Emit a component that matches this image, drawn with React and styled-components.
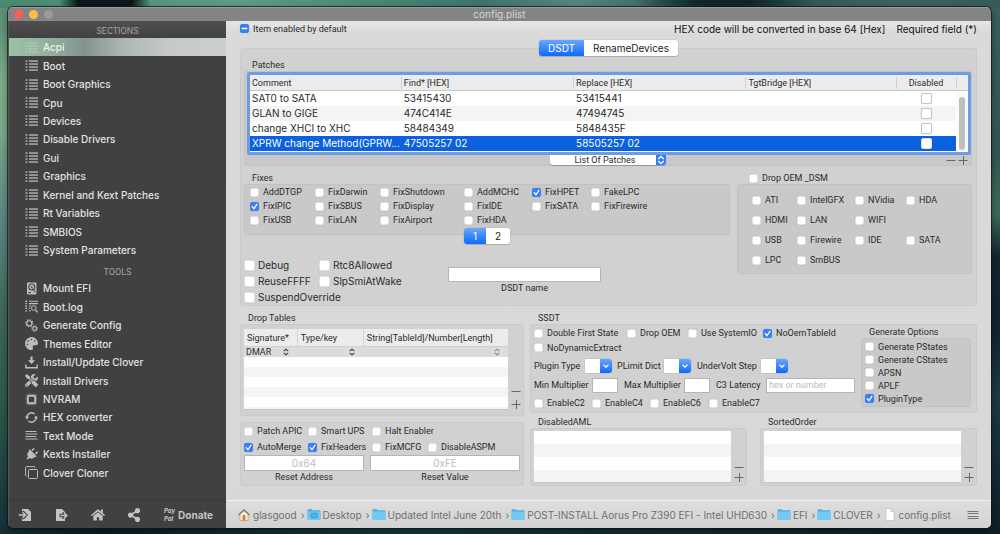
import React, { useState } from "react";
import styled, { createGlobalStyle, css } from "styled-components";
import { FaHome, FaPalette, FaPlug, FaShareAlt, FaTools } from "react-icons/fa";

const fontStack = "Inter, \"Liberation Sans\", sans-serif";
const smallFontStack = "Roboto, \"Liberation Sans\", sans-serif";
const ink = "#2a2a2a";
const blueGradient = "linear-gradient(#69a8fc, #0f69f9)";
const stripe = "#f3f4f4";
const tick = "url(\"data:image/svg+xml,%3Csvg xmlns='http://www.w3.org/2000/svg' viewBox='0 0 10 10'%3E%3Cpath d='M2.4 5.2l2 2.3 3.3-5' fill='none' stroke='white' stroke-width='1.5' stroke-linecap='round'/%3E%3C/svg%3E\")";
const dash = "url(\"data:image/svg+xml,%3Csvg xmlns='http://www.w3.org/2000/svg' viewBox='0 0 10 10'%3E%3Cpath d='M2.5 5h5' fill='none' stroke='white' stroke-width='1.5' stroke-linecap='round'/%3E%3C/svg%3E\")";

const smallText = css`
  font-family: ${smallFontStack};
  font-size: 9px;
  font-weight: 400;
`;

const GlobalStyle = createGlobalStyle`
  *, *::before, *::after {
    box-sizing: border-box;
  }
  body {
    background: #24413f;
    color: ${ink};
    font-family: ${fontStack};
    font-size: 10px;
    line-height: 12px;
    margin: 0;
  }
  button, input, select {
    color: inherit;
    font: inherit;
    margin: 0;
    padding: 0;
  }
`;

const Desktop = styled.div`
  background:
    radial-gradient(ellipse 46px 30px at 105px 0, #0c191c 60%, transparent),
    radial-gradient(ellipse 90px 12px at 725px 2px, #10262c 30%, transparent),
    radial-gradient(ellipse 60px 60px at 0 90px, #7fae8c, transparent),
    linear-gradient(90deg, #4a8a70 0, #5f9d84 24%, #3f746b 48%, #568680 58%, #2b5150 72%, #3c6463 90%, #355c58 100%) top / 100% 8px no-repeat,
    linear-gradient(90deg, #16302f, #0c1e24 10%, #1a3a38 40%, #14282c 70%, #0d2024) bottom / 100% 6px no-repeat,
    linear-gradient(#3a605d, #345653 28%, #3d6a57 40%, #14262f 48%, #12222f 60%, #1d3a44 74%, #0f1e27) right / 12px 100% no-repeat,
    linear-gradient(#5b9076, #77a888 25%, #5d8a84 40%, #3e675a 60%, #2c5c4c 75%, #16303a);
  display: flex;
  min-height: 100vh;
  padding: 7px 9px 6px 8px;
`;

const Window = styled.div`
  border-radius: 5px;
  box-shadow: 0 0 0 1px rgba(10, 20, 20, 0.7), 0 3px 8px rgba(0, 0, 0, 0.4);
  display: flex;
  flex: 1;
  flex-direction: column;
  min-width: 0;
  overflow: hidden;
`;

const TitleBar = styled.header`
  align-items: center;
  background: #848484;
  box-shadow: inset 0 1px 0 #9a9a9a;
  color: #d6d6d6;
  display: grid;
  grid-template-columns: 1fr auto 1fr;
  height: 14px;
  padding: 0 6px;
`;

const Lights = styled.div`
  display: flex;
  gap: 6px;
`;

const Light = styled.button`
  background: ${({ $color }) => $color};
  border: 0;
  border-radius: 50%;
  height: 9px;
  width: 9px;
`;

const Body = styled.div`
  display: grid;
  flex: 1;
  grid-template-columns: 218px minmax(0, 1fr);
`;

const Sidebar = styled.nav`
  background: #414141;
  border-left: 1px solid #555;
  color: #e2e2e2;
  display: flex;
  flex-direction: column;
  font-weight: 500;
`;

const SidebarHeading = styled.h2`
  ${smallText};
  color: #a2a2a2;
  height: ${({ $tall }) => ($tall ? "20px" : "17px")};
  line-height: 12px;
  margin: 0;
  padding-top: ${({ $tall }) => ($tall ? "7px" : "4px")};
  text-align: center;
  ${({ $tall }) => !$tall && css`
    background: linear-gradient(#4f4f4f, #414141);
  `}
`;

const SidebarList = styled.ul`
  display: grid;
  flex: ${({ $count }) => $count} 1 0;
  grid-auto-rows: 1fr;
  list-style: none;
  margin: 0;
  padding: 0;
`;

const SidebarLink = styled.a`
  align-items: center;
  color: inherit;
  display: flex;
  gap: 5px;
  height: 100%;
  padding-left: 16px;
  text-decoration: none;
  svg {
    color: #bdbdbd;
    flex: none;
    height: 13px;
    width: 13px;
  }
  ${({ $active }) => $active && css`
    background: linear-gradient(90deg, #9cc3a5 0, #8fae9c 20%, #84938f 35%, #adb5b3 52%, #c6cac9 75%, #cbd0cf 100%);
    color: #eef3f0;
    svg {
      color: #b4c8ba;
    }
  `}
`;

const SidebarFooter = styled.div`
  align-items: center;
  border-top: 1px solid #383838;
  display: flex;
  height: 28px;
  justify-content: space-between;
  margin-top: 18px;
  padding: 0 13px 0 9px;
`;

const ToolButton = styled.button`
  align-items: center;
  background: none;
  border: 0;
  color: #c4c4c4;
  display: flex;
  font-weight: 700;
  gap: 3px;
  svg {
    height: 14px;
    width: 14px;
  }
`;

const PayPal = styled.span`
  display: grid;
  font-size: 6px;
  font-style: italic;
  line-height: 8px;
  text-align: left;
`;

const Main = styled.main`
  background: linear-gradient(#e6e6e6, #dadada 12px, #d8d8d8);
  display: flex;
  flex-direction: column;
  min-width: 0;
`;

const Content = styled.div`
  flex: 1;
  padding: 0 14px;
`;

const TopRow = styled.div`
  align-items: center;
  display: flex;
  height: 15px;
`;

const Note = styled.span`
  color: #111;
  margin-left: ${({ $first }) => ($first ? "auto" : "11px")};
`;

const Check = styled.label`
  ${smallText};
  align-items: center;
  display: flex;
  gap: 4px;
  white-space: nowrap;
  ${({ $large }) => $large && css`
    font-family: ${fontStack};
    font-size: 10px;
    gap: 3px;
  `}
  ${({ $span }) => $span && css`
    grid-column: span ${$span};
  `}
`;

const Box = styled.input.attrs({ type: "checkbox" })`
  appearance: none;
  background: #fff;
  border: 1px solid ${({ $outlined }) => ($outlined ? "#c4c4c4" : "#e3e3e3")};
  border-radius: 2px;
  box-shadow: 0 0 1px rgba(0, 0, 0, 0.2);
  flex: none;
  height: ${({ $large }) => ($large ? "11px" : "9px")};
  width: ${({ $large }) => ($large ? "11px" : "9px")};
  &:checked {
    background: ${tick} center / 9px no-repeat, #3880f8;
    border-color: #3880f8;
  }
  &[aria-checked="mixed"] {
    background: ${dash} center / 9px no-repeat, #3880f8;
    border-color: #3880f8;
  }
`;

const Segments = styled.div`
  background: #fff;
  border-radius: 3px;
  box-shadow: 0 0 1px rgba(0, 0, 0, 0.45), 0 1px 1px rgba(0, 0, 0, 0.15);
  display: flex;
  height: 16px;
  overflow: hidden;
  position: relative;
  width: max-content;
`;

const TabSegments = styled(Segments)`
  margin: 4px auto -8px;
`;

const PageSegments = styled(Segments)`
  margin: 1px 0 -9px 214px;
`;

const Segment = styled.button`
  background: ${({ $on }) => ($on ? blueGradient : "#fff")};
  border: 0;
  color: ${({ $on }) => ($on ? "#fff" : "#222")};
  padding: 0 9px;
`;

const Group = styled.section`
  background: ${({ $inner }) => ($inner ? "#c9c9c9" : "#d1d1d1")};
  border-radius: 3px;
  box-shadow: inset 0 0 0 1px rgba(0, 0, 0, 0.03);
`;

const GroupTitle = styled.h3`
  ${smallText};
  height: 12px;
  margin: 0;
  padding-left: 8px;
`;

const AcpiGroup = styled(Group)`
  padding: 11px 5px 1px 4px;
`;

const PatchesGroup = styled(Group)`
  padding: 1px 1px 0 3px;
`;

const FocusRing = styled.div`
  background: #fff;
  border: 3px solid #6c9ce2;
  border-radius: 2px;
  padding-bottom: 1px;
`;

const PatchTable = styled.table`
  border-collapse: separate;
  border-spacing: 0;
  table-layout: fixed;
  width: 100%;
  th {
    ${smallText};
    background: #ececec;
    border-bottom: 1px solid #c8c8c8;
    height: 16px;
    text-align: left;
  }
  th, td {
    overflow: hidden;
    padding: 0 0 0 3px;
    white-space: nowrap;
  }
  th:first-child, td:first-child {
    padding-left: 2px;
  }
  th + th {
    background: linear-gradient(#cfcfcf, #cfcfcf) 0 2px / 1px 12px no-repeat, #ececec;
  }
  td {
    height: 15px;
    line-height: 13px;
  }
`;

const PatchRow = styled.tr`
  background: ${({ $index }) => ($index % 2 ? stripe : "#fff")};
  ${({ $selected }) => $selected && css`
    background: #0b61de;
    color: #fff;
  `}
`;

const CenteredHeader = styled.th`
  && {
    padding: 0;
    text-align: center;
  }
`;

const CheckCell = styled.td`
  && {
    padding: 0;
    text-align: center;
  }
  input {
    display: block;
    margin: 0 auto;
  }
`;

const ScrollCell = styled.td`
  background: #fafafa;
  div {
    background: #bfbfbf;
    border-radius: 3px;
    height: 53px;
    margin-top: 4px;
    width: 6px;
  }
`;

const PatchActions = styled.div`
  align-items: start;
  display: grid;
  grid-template-columns: 1fr auto 1fr;
  height: 11px;
  padding-right: 2px;
`;

const PopUp = styled.div`
  ${smallText};
  background: #fff;
  border-radius: 0 0 3px 3px;
  box-shadow: 0 1px 1px rgba(0, 0, 0, 0.25);
  display: grid;
  grid-column: 2;
  grid-template-columns: 106px 10px;
  height: 10px;
  overflow: hidden;
  select {
    appearance: none;
    background: none;
    border: 0;
    grid-area: 1 / 1 / 2 / 3;
    line-height: 9px;
    padding-right: 6px;
    text-align: center;
  }
  svg {
    background: #2e7dfa;
    grid-area: 1 / 2;
    height: 10px;
    pointer-events: none;
    width: 10px;
    z-index: 1;
  }
`;

const PlusMinus = styled.div`
  display: flex;
  flex-direction: ${({ $column }) => ($column ? "column" : "row")};
  gap: ${({ $gap }) => $gap || 0}px;
  justify-content: flex-end;
  padding-bottom: ${({ $column }) => ($column ? "1px" : "0")};
  button {
    background: none;
    border: 0;
    color: #666;
    display: flex;
    justify-content: center;
  }
  svg {
    height: 10px;
    width: 12px;
  }
`;

const MiddleRow = styled.div`
  display: grid;
  gap: 7px;
  grid-template-columns: minmax(0, 486fr) minmax(0, 235fr);
  margin-top: 6px;
`;

const CheckGrid = styled.div`
  display: grid;
  grid-auto-rows: ${({ $row }) => $row || 14}px;
  grid-template-columns: ${({ $columns }) => $columns};
`;

const FixesGroup = styled(Group)`
  display: flow-root;
  padding: 1px 6px 0;
`;

const DebugRow = styled.div`
  display: flex;
  margin-top: 22px;
`;

const DebugChecks = styled(CheckGrid)`
  width: 204px;
`;

const Field = styled.div`
  ${smallText};
  display: flex;
  flex: 1;
  flex-direction: column;
  max-width: ${({ $max }) => ($max ? `${$max}px` : "none")};
  text-align: center;
`;

const DsdtField = styled(Field)`
  margin-top: 10px;
`;

const TextInput = styled.input`
  background: #fff;
  border: 1px solid #b5b5b5;
  height: ${({ $large }) => ($large ? "16px" : "15px")};
  min-width: 0;
  padding: 0 2px;
  text-align: ${({ $center }) => ($center ? "center" : "left")};
  width: 100%;
  ${({ $large }) => $large && css`
    font-family: ${fontStack};
    font-size: 10px;
  `}
  &::placeholder {
    color: #bdbdbd;
  }
`;

const DsmCheck = styled.div`
  display: flex;
  height: 12px;
  padding-left: 12px;
`;

const DsmGroup = styled(Group)`
  padding: 6px 15px 4px;
`;

const LowerRow = styled.div`
  display: grid;
  gap: 6px;
  grid-template-columns: minmax(0, 284fr) minmax(0, 447fr);
  margin-top: 6px;
`;

const DropGroup = styled(Group)`
  display: grid;
  grid-template-columns: minmax(0, 1fr) 16px;
  height: 92px;
  padding: 5px 0 6px 4px;
`;

const DropFrame = styled.div`
  background: repeating-linear-gradient(#fff 0 10px, ${stripe} 10px 20px) 0 8px;
  border-bottom: 1px solid #c6c6c6;
`;

const DropTable = styled.table`
  border-collapse: separate;
  border-spacing: 0;
  table-layout: fixed;
  width: 100%;
  th, td {
    ${smallText};
  }
  th {
    background: #ececec;
    border-bottom: 1px solid #d0d0d0;
    height: 18px;
    padding: 0 0 0 3px;
    text-align: left;
    white-space: nowrap;
  }
  th + th {
    border-left: 1px solid #d4d4d4;
  }
  td {
    background: #dcdcdc;
    height: 10px;
    line-height: 10px;
    padding: 0 7px 0 2px;
  }
`;

const CellSelect = styled.div`
  align-items: center;
  display: flex;
  opacity: ${({ $dim }) => ($dim ? 0.5 : 1)};
  select {
    appearance: none;
    background: none;
    border: 0;
    flex: 1;
    height: 10px;
    min-width: 0;
  }
  svg {
    height: 10px;
    pointer-events: none;
    width: 8px;
  }
`;

const ResetGroup = styled(Group)`
  margin-top: 6px;
  padding: 1px 4px 3px;
`;

const ResetFields = styled.div`
  display: grid;
  gap: 6px;
  grid-template-columns: 120fr 150fr;
`;

const SsdtGroup = styled(Group)`
  display: grid;
  gap: 6px;
  grid-template-columns: minmax(0, 321fr) minmax(0, 110fr);
  height: 89px;
  padding: 2px 6px 0 4px;
`;

const SsdtRows = styled.div`
  ${smallText};
  display: grid;
  grid-template-rows: 14px 15px 22px 16px 20px;
`;

const SsdtRow = styled.div`
  align-items: center;
  display: grid;
  grid-template-columns: ${({ $columns }) => $columns};
  white-space: nowrap;
`;

const Combo = styled.div`
  background: #fff;
  border-radius: 0 3px 3px 0;
  box-shadow: 0 0 1px rgba(0, 0, 0, 0.5);
  display: grid;
  grid-template-columns: 15px 12px;
  height: 14px;
  overflow: hidden;
  width: 27px;
  select {
    appearance: none;
    background: none;
    border: 0;
    grid-area: 1 / 1 / 2 / 3;
  }
  svg {
    background: ${blueGradient};
    grid-area: 1 / 2;
    height: 14px;
    pointer-events: none;
    width: 12px;
  }
`;

const GenerateGroup = styled(Group)`
  padding: 2px 4px;
`;

const ListsRow = styled.div`
  display: grid;
  gap: 13px;
  grid-template-columns: 1fr 1fr;
  margin-top: 3px;
`;

const ListGroup = styled(Group)`
  display: grid;
  grid-template-columns: minmax(0, 1fr) 16px;
  height: 58px;
  padding: 3px 0 3px 4px;
`;

const EmptyList = styled.div`
  background: repeating-linear-gradient(#fff 0 13px, ${stripe} 13px 26px);
  border-bottom: 1px solid #c6c6c6;
`;

const PathBar = styled.footer`
  align-items: center;
  background: linear-gradient(#dedede, #d2d2d2);
  border-top: 1px solid #efefef;
  color: #6f6f6f;
  display: flex;
  height: 28px;
  padding: 0 12px 0 11px;
  > svg {
    height: 12px;
    margin-left: auto;
    width: 12px;
  }
`;

const Crumb = styled.a`
  align-items: center;
  color: inherit;
  display: flex;
  gap: 2px;
  text-decoration: none;
  white-space: nowrap;
  svg {
    height: 13px;
    width: 14px;
  }
  &:not(:last-of-type)::after {
    content: "›";
    padding: 0 2px;
  }
`;

const ListIcon = () => (
  <svg viewBox="0 0 13 13" fill="currentColor" aria-hidden="true">
    {[2, 5, 8, 11].map((y) => (
      <g key={y}>
        <rect x="0.5" y={y - 0.6} width="2" height="1.3" />
        <rect x="4" y={y - 0.6} width="9" height="1.3" />
      </g>
    ))}
  </svg>
);

const DiskIcon = () => (
  <svg viewBox="0 0 13 13" aria-hidden="true">
    <rect x="2" y="0.5" width="9.5" height="12" rx="1" fill="currentColor" />
    <circle cx="6.8" cy="5" r="3" fill="none" stroke="#444" strokeWidth="1.1" />
    <circle cx="6.8" cy="5" r="0.9" fill="#444" />
    <path d="M7 6.5l3.6 4M3.4 10.6h2.5" stroke="#444" strokeWidth="1.1" />
  </svg>
);

const LogIcon = () => (
  <svg viewBox="0 0 13 13" fill="none" stroke="currentColor" aria-hidden="true">
    <path d="M4 1.2h9M4 3.6h9M4 6h2M4 8.4h1.2M4 10.8h2" strokeWidth="1.1" />
    <path d="M1.2 .6v12" strokeWidth="1.8" strokeDasharray="1.3 1.1" />
    <circle cx="8.8" cy="8" r="2.3" />
    <path d="M10.4 9.8l2.2 2.6" strokeWidth="1.3" />
  </svg>
);

const GearsIcon = () => (
  <svg viewBox="0 0 13 13" fill="none" stroke="currentColor" aria-hidden="true">
    <circle cx="4.3" cy="4.2" r="2.5" strokeWidth="1.1" />
    <circle cx="4.3" cy="4.2" r="3.5" strokeWidth="1.2" strokeDasharray="1.25 1.5" />
    <circle cx="9.6" cy="9.5" r="1.9" strokeWidth="1.1" />
    <circle cx="9.6" cy="9.5" r="2.8" strokeWidth="1" strokeDasharray="1.1 1.1" />
  </svg>
);

const DownloadIcon = () => (
  <svg viewBox="0 0 13 13" aria-hidden="true">
    <path d="M5.4 .5h2.2v3.8h2.6L6.5 8 2.8 4.3h2.6z" fill="currentColor" />
    <path d="M.8 8.5v3.3h11.4V8.5" fill="none" stroke="currentColor" strokeWidth="1.4" />
  </svg>
);

const ChipIcon = () => (
  <svg viewBox="0 0 13 13" fill="none" stroke="currentColor" aria-hidden="true">
    <rect x="2.8" y="2.8" width="7.4" height="7.4" rx="1" strokeWidth="1.9" />
    <rect x="1.2" y="1.2" width="10.6" height="10.6" rx="1" strokeWidth="1" strokeDasharray="1 1" opacity="0.5" />
  </svg>
);

const CycleIcon = () => (
  <svg viewBox="0 0 13 13" aria-hidden="true">
    <path d="M2 7.8A4.7 4.7 0 0 1 9.6 3M11 5.2A4.7 4.7 0 0 1 3.4 10" fill="none" stroke="currentColor" strokeWidth="1.3" />
    <path d="M0 5.6h4L2 8.4zM13 7.4H9l2-2.8z" fill="currentColor" />
  </svg>
);

const TextIcon = () => (
  <svg viewBox="0 0 13 13" fill="none" stroke="currentColor" aria-hidden="true">
    <path d="M.5 2.5h11M.5 5h12M.5 7.5h10.5M.5 10h12" />
  </svg>
);

const PlugIcon = () => (
  <svg viewBox="0 0 13 13" aria-hidden="true">
    <g transform="rotate(45 6.5 6.5)">
      <FaPlug size={13} />
    </g>
  </svg>
);

const CloneIcon = () => (
  <svg viewBox="0 0 13 13" fill="none" stroke="currentColor" aria-hidden="true">
    <rect x="3.5" y="3.5" width="9" height="9" rx="1" />
    <path d="M1.6 10.2a1 1 0 0 1-1-1V1.6a1 1 0 0 1 1-1h7.6a1 1 0 0 1 1 1" />
  </svg>
);

const ImportIcon = () => (
  <svg viewBox="0 0 14 14" aria-hidden="true">
    <path d="M4 1h6l3 3v9H4v-2.5l1.6 1L10 7 5.6 2.6 4 3.8z" fill="currentColor" />
    <path d="M.8 7H7M4.6 4.2L7.6 7l-3 2.8" fill="none" stroke="currentColor" strokeWidth="1.5" />
  </svg>
);

const ExportIcon = () => (
  <svg viewBox="0 0 14 14" aria-hidden="true">
    <path d="M2 1h6l3 3v1.2L8.6 3.8v2H5.5v3.4h3.1v2l2.4-1.4V13H2z" fill="currentColor" />
    <path d="M6.5 7.5h6M10.2 4.9l2.6 2.6-2.6 2.6" fill="none" stroke="currentColor" strokeWidth="1.5" />
  </svg>
);

const UpDownIcon = ({ color = "#333" }) => (
  <svg viewBox="0 0 10 10" fill="none" stroke={color} strokeWidth="1.3" aria-hidden="true">
    <path d="M2.2 4L5 1.4l2.8 2.6M2.2 6L5 8.6l2.8-2.6" />
  </svg>
);

const HomeFolderIcon = () => (
  <svg viewBox="0 0 14 13" aria-hidden="true">
    <path d="M3 6v6.5h8V6L7 2.5z" fill="#f4f0e6" stroke="#a58f6c" strokeWidth="0.6" />
    <path d="M1.5 7L7 2l5.5 5" fill="none" stroke="#8c7355" strokeWidth="1.3" />
    <rect x="5.6" y="7" width="2.8" height="5.5" fill="#dd7a23" />
  </svg>
);

const FolderIcon = ({ desktop }) => (
  <svg viewBox="0 0 14 13" aria-hidden="true">
    <path d="M.5 2.2q0-.9.9-.9h3.4l1 1h6.8q.9 0 .9.9v8.2H.5z" fill="#4fb0de" />
    <rect x="0.5" y="3.4" width="13" height="8.4" rx="0.6" fill="#72c9f3" />
    {desktop && <rect x="4" y="5.2" width="6.4" height="4.6" rx="0.6" fill="#4fb3ea" stroke="#3593c8" strokeWidth="0.8" />}
  </svg>
);

const FileIcon = () => (
  <svg viewBox="0 0 14 13" aria-hidden="true">
    <path d="M3 .5h5l3 3v9H3z" fill="#fff" stroke="#b5b5b5" strokeWidth="0.6" />
    <path d="M8 .5v3h3" fill="#ddd" stroke="#b5b5b5" strokeWidth="0.6" />
  </svg>
);

const MenuIcon = () => (
  <svg viewBox="0 0 12 12" stroke="#777" aria-hidden="true">
    <path d="M.5 2.5h11M.5 4.5h11M.5 7.5h11M.5 9.5h11" />
  </svg>
);

const sections = [
  "Acpi", "Boot", "Boot Graphics", "Cpu", "Devices", "Disable Drivers", "Gui", "Graphics",
  "Kernel and Kext Patches", "Rt Variables", "SMBIOS", "System Parameters"
];

const tools = [
  ["Mount EFI", DiskIcon],
  ["Boot.log", LogIcon],
  ["Generate Config", GearsIcon],
  ["Themes Editor", FaPalette],
  ["Install/Update Clover", DownloadIcon],
  ["Install Drivers", FaTools],
  ["NVRAM", ChipIcon],
  ["HEX converter", CycleIcon],
  ["Text Mode", TextIcon],
  ["Kexts Installer", PlugIcon],
  ["Clover Cloner", CloneIcon]
];

const patches = [
  ["SAT0 to SATA", "53415430", "53415441"],
  ["GLAN to GIGE", "474C414E", "47494745"],
  ["change XHCI to XHC", "58484349", "5848435F"],
  ["XPRW change Method(GPRW...", "47505257 02", "58505257 02"]
];

const fixes = [
  "AddDTGP", "FixDarwin", "FixShutdown", "AddMCHC", "FixHPET", "FakeLPC",
  "FixIPIC", "FixSBUS", "FixDisplay", "FixIDE", "FixSATA", "FixFirewire",
  "FixUSB", "FixLAN", "FixAirport", "FixHDA"
];

// null leaves a cell of the grid empty
const dsm = [
  "ATI", "IntelGFX", "NVidia", "HDA",
  "HDMI", "LAN", "WIFI", null,
  "USB", "Firewire", "IDE", "SATA",
  "LPC", "SmBUS"
];

const enabled = ["FixHPET", "FixIPIC", "AutoMerge", "FixHeaders", "NoOemTableId", "PluginType"];

const Option = ({ label, large, span }) => (
  <Check $large={large} $span={span}>
    <Box $large={large} defaultChecked={enabled.includes(label)} />
    {label}
  </Check>
);

const renderOptions = (labels, large) =>
  labels.map((label, index) => (label ? <Option key={label} label={label} large={large} /> : <span key={index} />));

const AddRemove = ({ column, gap, name }) => (
  <PlusMinus $column={column} $gap={gap}>
    <button type="button" aria-label={`Remove from ${name}`}>
      <svg viewBox="0 0 12 10" stroke="currentColor"><path d="M1.5 5.5h9" /></svg>
    </button>
    <button type="button" aria-label={`Add to ${name}`}>
      <svg viewBox="0 0 12 10" stroke="currentColor"><path d="M1.5 5.5h9M6.5 1v9" /></svg>
    </button>
  </PlusMinus>
);

const Switcher = ({ as: Wrapper, items }) => {
  const [active, setActive] = useState(items[0]);
  return (
    <Wrapper>
      {items.map((item) => (
        <Segment key={item} type="button" $on={item === active} onClick={() => setActive(item)}>{item}</Segment>
      ))}
    </Wrapper>
  );
};

const ComboBox = ({ id }) => (
  <Combo>
    <select id={id}><option value="" /></select>
    <svg viewBox="0 0 12 14" fill="none" stroke="#fff" strokeWidth="1.3" aria-hidden="true"><path d="M3.6 5.8L6 8.2l2.4-2.4" /></svg>
  </Combo>
);

const SidebarPanel = () => {
  const [current, setCurrent] = useState("Acpi");
  const renderLink = (label, Icon) => (
    <li key={label}>
      <SidebarLink href="#" $active={label === current} onClick={() => setCurrent(label)}>
        <Icon />
        {label}
      </SidebarLink>
    </li>
  );

  return (
    <Sidebar>
      <SidebarHeading>SECTIONS</SidebarHeading>
      <SidebarList $count={sections.length}>{sections.map((label) => renderLink(label, ListIcon))}</SidebarList>
      <SidebarHeading $tall>TOOLS</SidebarHeading>
      <SidebarList $count={tools.length}>{tools.map(([label, Icon]) => renderLink(label, Icon))}</SidebarList>
      <SidebarFooter>
        <ToolButton type="button" aria-label="Import"><ImportIcon /></ToolButton>
        <ToolButton type="button" aria-label="Export"><ExportIcon /></ToolButton>
        <ToolButton type="button" aria-label="Home"><FaHome /></ToolButton>
        <ToolButton type="button" aria-label="Share"><FaShareAlt /></ToolButton>
        <ToolButton type="button">
          <PayPal><span>Pay</span><span>Pal</span></PayPal>
          Donate
        </ToolButton>
      </SidebarFooter>
    </Sidebar>
  );
};

const Patches = () => (
  <PatchesGroup $inner>
    <FocusRing>
      <PatchTable>
        <colgroup>
          <col width="21%" />
          <col width="24%" />
          <col width="24%" />
          <col />
          <col width="60" />
          <col width="12" />
        </colgroup>
        <thead>
          <tr>
            <th>Comment</th>
            <th>Find* [HEX]</th>
            <th>Replace [HEX]</th>
            <th>TgtBridge [HEX]</th>
            <CenteredHeader>Disabled</CenteredHeader>
            <th aria-label="Scroll" />
          </tr>
        </thead>
        <tbody>
          {patches.map(([comment, find, replace], index) => (
            <PatchRow key={find} $index={index} $selected={index === 3}>
              <td>{comment}</td>
              <td>{find}</td>
              <td>{replace}</td>
              <td />
              <CheckCell><Box $large $outlined={index !== 3} aria-label={`Disable ${comment}`} /></CheckCell>
              {index === 0 && <ScrollCell rowSpan={4}><div /></ScrollCell>}
            </PatchRow>
          ))}
        </tbody>
      </PatchTable>
    </FocusRing>
    <PatchActions>
      <PopUp>
        <select aria-label="List Of Patches"><option>List Of Patches</option></select>
        <UpDownIcon color="#fff" />
      </PopUp>
      <AddRemove name="patches" />
    </PatchActions>
  </PatchesGroup>
);

const DropTables = () => (
  <DropGroup>
    <DropFrame>
      <DropTable>
        <colgroup>
          <col width="20%" />
          <col width="25%" />
          <col />
        </colgroup>
        <thead>
          <tr>
            <th>Signature*</th>
            <th>Type/key</th>
            <th>String[TableId]/Number[Length]</th>
          </tr>
        </thead>
        <tbody>
          <tr>
            <td><CellSelect><select aria-label="Signature"><option>DMAR</option></select><UpDownIcon /></CellSelect></td>
            <td><CellSelect><select aria-label="Type or key"><option value="" /></select><UpDownIcon /></CellSelect></td>
            <td><CellSelect $dim><select aria-label="String or number"><option value="" /></select><UpDownIcon /></CellSelect></td>
          </tr>
        </tbody>
      </DropTable>
    </DropFrame>
    <AddRemove column gap={3} name="drop tables" />
  </DropGroup>
);

const Ssdt = () => (
  <SsdtGroup>
    <SsdtRows>
      <SsdtRow $columns="93px 61px 75px 1fr">{renderOptions(["Double First State", "Drop OEM", "Use SystemIO", "NoOemTableId"])}</SsdtRow>
      <SsdtRow $columns="1fr"><Option label="NoDynamicExtract" /></SsdtRow>
      <SsdtRow $columns="51px 32px 47px 33px 64px 1fr">
        <label htmlFor="plugin-type">Plugin Type</label>
        <ComboBox id="plugin-type" />
        <label htmlFor="plimit">PLimit Dict</label>
        <ComboBox id="plimit" />
        <label htmlFor="undervolt">UnderVolt Step</label>
        <ComboBox id="undervolt" />
      </SsdtRow>
      <SsdtRow $columns="58px 26px 6px 60px 26px 6px 50px 1fr">
        <label htmlFor="min-multiplier">Min Multiplier</label>
        <TextInput id="min-multiplier" />
        <span />
        <label htmlFor="max-multiplier">Max Multiplier</label>
        <TextInput id="max-multiplier" />
        <span />
        <label htmlFor="c3-latency">C3 Latency</label>
        <TextInput id="c3-latency" placeholder="hex or number" />
      </SsdtRow>
      <SsdtRow $columns="58px 58px 59px 1fr">{renderOptions(["EnableC2", "EnableC4", "EnableC6", "EnableC7"])}</SsdtRow>
    </SsdtRows>
    <div>
      <GroupTitle>Generate Options</GroupTitle>
      <GenerateGroup $inner>
        <CheckGrid $row={13} $columns="1fr">
          {renderOptions(["Generate PStates", "Generate CStates", "APSN", "APLF", "PluginType"])}
        </CheckGrid>
      </GenerateGroup>
    </div>
  </SsdtGroup>
);

const App = () => (
  <Desktop>
    <GlobalStyle />
    <Window>
      <TitleBar>
        <Lights>
          <Light type="button" aria-label="Close" $color="#fc5b57" />
          <Light type="button" aria-label="Minimize" $color="#fdbe41" />
          <Light type="button" aria-label="Zoom" $color="#9b9b9b" />
        </Lights>
        <span>config.plist</span>
      </TitleBar>
      <Body>
        <SidebarPanel />
        <Main>
          <Content>
            <TopRow>
              <Check><Box aria-checked="mixed" />Item enabled by default</Check>
              <Note $first>HEX code will be converted in base 64 [Hex]</Note>
              <Note>Required field (*)</Note>
            </TopRow>
            <Switcher as={TabSegments} items={["DSDT", "RenameDevices"]} />
            <AcpiGroup>
              <GroupTitle>Patches</GroupTitle>
              <Patches />
              <MiddleRow>
                <div>
                  <GroupTitle>Fixes</GroupTitle>
                  <FixesGroup $inner>
                    <CheckGrid $columns="65px 65px 84px 68px 59px 1fr">{renderOptions(fixes)}</CheckGrid>
                    <Switcher as={PageSegments} items={["1", "2"]} />
                  </FixesGroup>
                  <DebugRow>
                    <DebugChecks $row={16} $columns="75px 1fr">
                      {renderOptions(["Debug", "Rtc8Allowed", "ReuseFFFF", "SlpSmiAtWake", "SuspendOverride"], true)}
                    </DebugChecks>
                    <DsdtField $max={153}>
                      <TextInput id="dsdt-name" />
                      <label htmlFor="dsdt-name">DSDT name</label>
                    </DsdtField>
                  </DebugRow>
                </div>
                <div>
                  <DsmCheck><Option label="Drop OEM _DSM" /></DsmCheck>
                  <DsmGroup $inner>
                    <CheckGrid $row={20} $columns="45px 58px 51px 1fr">{renderOptions(dsm)}</CheckGrid>
                  </DsmGroup>
                </div>
              </MiddleRow>
            </AcpiGroup>
            <LowerRow>
              <div>
                <GroupTitle>Drop Tables</GroupTitle>
                <DropTables />
                <ResetGroup>
                  <CheckGrid $row={16} $columns="64px 64px 56px 1fr">
                    <Option label="Patch APIC" />
                    <Option label="Smart UPS" />
                    <Option label="Halt Enabler" span={2} />
                    {renderOptions(["AutoMerge", "FixHeaders", "FixMCFG", "DisableASPM"])}
                  </CheckGrid>
                  <ResetFields>
                    <Field>
                      <TextInput $large $center id="reset-address" placeholder="0x64" />
                      <label htmlFor="reset-address">Reset Address</label>
                    </Field>
                    <Field>
                      <TextInput $large $center id="reset-value" placeholder="0xFE" />
                      <label htmlFor="reset-value">Reset Value</label>
                    </Field>
                  </ResetFields>
                </ResetGroup>
              </div>
              <div>
                <GroupTitle>SSDT</GroupTitle>
                <Ssdt />
                <ListsRow>
                  {["DisabledAML", "SortedOrder"].map((name) => (
                    <div key={name}>
                      <GroupTitle>{name}</GroupTitle>
                      <ListGroup>
                        <EmptyList />
                        <AddRemove column name={name} />
                      </ListGroup>
                    </div>
                  ))}
                </ListsRow>
              </div>
            </LowerRow>
          </Content>
          <PathBar>
            <Crumb href="#"><HomeFolderIcon />glasgood</Crumb>
            <Crumb href="#"><FolderIcon desktop />Desktop</Crumb>
            <Crumb href="#"><FolderIcon />Updated Intel June 20th</Crumb>
            <Crumb href="#"><FolderIcon />POST-INSTALL Aorus Pro Z390 EFI - Intel UHD630</Crumb>
            <Crumb href="#"><FolderIcon />EFI</Crumb>
            <Crumb href="#"><FolderIcon />CLOVER</Crumb>
            <Crumb href="#"><FileIcon />config.plist</Crumb>
            <MenuIcon />
          </PathBar>
        </Main>
      </Body>
    </Window>
  </Desktop>
);

export default App;
